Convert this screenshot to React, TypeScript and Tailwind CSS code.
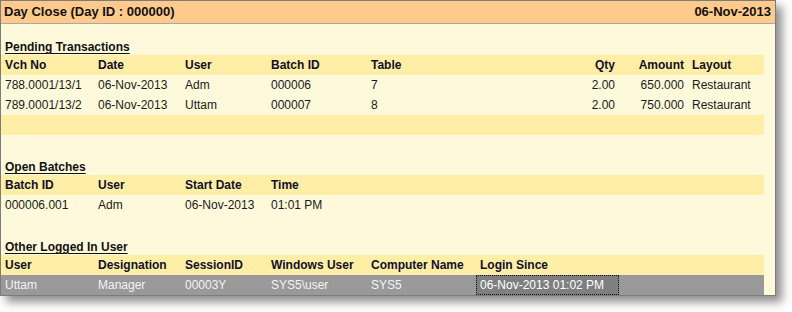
import React from 'react';

type Col = { w: string; align?: 'right'; pr?: string };

const pendingCols: Col[] = [
  { w: 'w-[93px]' },
  { w: 'w-[87px]' },
  { w: 'w-[86px]' },
  { w: 'w-[100px]' },
  { w: 'w-[109px]' },
  { w: 'w-[143px]', align: 'right' },
  { w: 'w-[69px]', align: 'right' },
  { w: 'w-[76px]' },
];

const pendingHead = ['Vch No', 'Date', 'User', 'Batch ID', 'Table', 'Qty', 'Amount', 'Layout'];
const pendingRows = [
  ['788.0001/13/1', '06-Nov-2013', 'Adm', '000006', '7', '2.00', '650.000', 'Restaurant'],
  ['789.0001/13/2', '06-Nov-2013', 'Uttam', '000007', '8', '2.00', '750.000', 'Restaurant'],
];

const batchCols: Col[] = [{ w: 'w-[93px]' }, { w: 'w-[87px]' }, { w: 'w-[86px]' }, { w: 'w-[100px]' }];
const batchHead = ['Batch ID', 'User', 'Start Date', 'Time'];
const batchRows = [['000006.001', 'Adm', '06-Nov-2013', '01:01 PM']];

const userCols: Col[] = [
  { w: 'w-[93px]' },
  { w: 'w-[87px]' },
  { w: 'w-[86px]' },
  { w: 'w-[100px]' },
  { w: 'w-[109px]' },
  { w: 'w-[143px]' },
];
const userHead = ['User', 'Designation', 'SessionID', 'Windows User', 'Computer Name', 'Login Since'];

function Cell({ col, children, bold }: { col: Col; children: React.ReactNode; bold?: boolean }) {
  return (
    <div
      className={`${col.w} flex h-5 shrink-0 items-center whitespace-nowrap px-1 ${
        col.align === 'right' ? 'justify-end' : ''
      } ${bold ? 'font-bold' : ''}`}
    >
      {children}
    </div>
  );
}

function HeaderRow({ cols, labels }: { cols: Col[]; labels: string[] }) {
  return (
    <div className="flex w-[763px] bg-[#ffeea6] text-[#10102a]">
      {labels.map((l, i) => (
        <Cell key={l} col={cols[i]} bold>
          {l}
        </Cell>
      ))}
    </div>
  );
}

function DataRow({ cols, values }: { cols: Col[]; values: string[] }) {
  return (
    <div className="flex w-[763px] text-[#1a1a1a]">
      {values.map((v, i) => (
        <Cell key={i} col={cols[i]}>
          {v}
        </Cell>
      ))}
    </div>
  );
}

function SectionTitle({ children }: { children: React.ReactNode }) {
  return (
    <div className="flex h-[15px] items-end px-1 pb-[1px] font-bold text-[#111] underline decoration-1 underline-offset-[2px]">
      {children}
    </div>
  );
}

export default function App() {
  return (
    <div className="h-[312px] w-[792px] bg-white" style={{ fontFamily: '"Liberation Sans", Arial, sans-serif' }}>
      <div className="w-[776px] border border-[#7c7c7c] bg-[#fff9db] text-[12px] leading-[14px] shadow-[6px_6px_9px_rgba(0,0,0,0.45)]">
        <div className="flex h-[23px] items-center justify-between border-b border-[#a8a8a8] bg-[#ffca8c] px-[3px] text-[13px] font-bold text-[#111]">
          <span>Day Close (Day ID : 000000)</span>
          <span className="pr-[1px]">06-Nov-2013</span>
        </div>

        <div className="h-[16px]" />
        <SectionTitle>Pending Transactions</SectionTitle>
        <div className="h-[0px]" />
        <HeaderRow cols={pendingCols} labels={pendingHead} />
        {pendingRows.map((r) => (
          <DataRow key={r[0]} cols={pendingCols} values={r} />
        ))}
        <div className="h-5 w-[763px] bg-[#ffeea6]" />

        <div className="h-[25px]" />
        <SectionTitle>Open Batches</SectionTitle>
        <HeaderRow cols={batchCols} labels={batchHead} />
        {batchRows.map((r) => (
          <DataRow key={r[0]} cols={batchCols} values={r} />
        ))}

        <div className="h-[25px]" />
        <SectionTitle>Other Logged In User</SectionTitle>
        <HeaderRow cols={userCols} labels={userHead} />
        <div className="flex w-[763px] bg-[#999999] text-[#f4f4f4]">
          <Cell col={userCols[0]}>Uttam</Cell>
          <Cell col={userCols[1]}>Manager</Cell>
          <Cell col={userCols[2]}>00003Y</Cell>
          <Cell col={userCols[3]}>SYS5\user</Cell>
          <Cell col={userCols[4]}>SYS5</Cell>
          <div className="flex h-5 w-[143px] shrink-0 items-center whitespace-nowrap border border-dotted border-[#111] bg-[#7f7f7f] px-[3px] text-white">
            06-Nov-2013 01:02 PM
          </div>
        </div>
      </div>
    </div>
  );
}
